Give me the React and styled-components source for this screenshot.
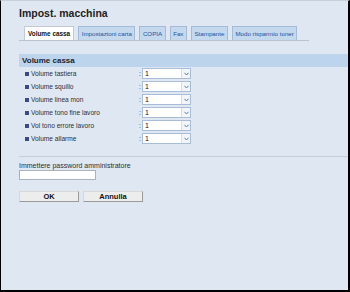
import React from "react";
import styled, { createGlobalStyle } from "styled-components";

const Global = createGlobalStyle`
  html, body { margin: 0; padding: 0; }
  body { font-family: "Liberation Sans", Arial, sans-serif; }
  * { box-sizing: border-box; }
`;

const Frame = styled.div`
  width: 350px;
  height: 292px;
  background: #dfe8f2;
  border-top: 1px solid #c9cfd6;
  border-left: 1px solid #000;
  border-right: 2px solid #000;
  border-bottom: 2px solid #000;
  padding-left: 18px;
  color: #1a1a1a;
  overflow: hidden;
`;

const Title = styled.h1`
  margin: 5px 0 0;
  font-size: 10.5px;
  line-height: 14px;
  font-weight: bold;
  color: #222;
`;

const TabBar = styled.div`
  display: flex;
  gap: 4px;
  width: 290px;
  margin-top: 6px;
  padding-left: 5px;
  border-bottom: 1px solid #b9c3ce;
`;

const Tab = styled.div`
  height: 14px;
  padding: 0 ${(p) => (p.$active ? 3 : 2.5)}px;
  display: flex;
  align-items: center;
  font-size: ${(p) => (p.$active ? 6.4 : 6.2)}px;
  white-space: nowrap;
  border: 1px solid ${(p) => (p.$active ? "#c3c9d0" : "#a3bbd6")};
  border-bottom: none;
  background: ${(p) => (p.$active ? "#fff" : "#c4d8ee")};
  color: ${(p) => (p.$active ? "#111" : "#2452a0")};
  font-weight: ${(p) => (p.$active ? "bold" : "normal")};
`;

const SectionBar = styled.div`
  margin-top: 13px;
  height: 13px;
  background: #bdd5ec;
  font-size: 8px;
  font-weight: bold;
  line-height: 13px;
  padding-left: 3px;
  color: #1c2330;
`;

const Rows = styled.div`
  display: flex;
  flex-direction: column;
`;

const Row = styled.div`
  display: flex;
  align-items: center;
  height: 13px;
  padding-left: 6px;
  font-size: 6.6px;
  color: #2a2f3a;
`;

const Bullet = styled.span`
  width: 4px;
  height: 4px;
  background: #3b4a80;
  margin-right: 2px;
`;

const Label = styled.span`
  width: 108px;
`;

const Colon = styled.span`
  width: 3px;
`;

const Select = styled.div`
  display: flex;
  width: 49px;
  height: 11px;
  background: #fff;
  border: 1px solid #a9bdd6;
`;

const Value = styled.span`
  flex: 1;
  padding-left: 2px;
  font-size: 7px;
  line-height: 9px;
  color: #111;
`;

const Arrow = styled.span`
  width: 9px;
  display: flex;
  align-items: center;
  justify-content: center;
  background: #f2f5fa;
  border-left: 1px solid #d4deea;
`;

const Divider = styled.div`
  margin-top: 11px;
  height: 1px;
  background: #c5ced8;
`;

const FieldLabel = styled.div`
  margin-top: 4px;
  font-size: 7px;
  line-height: 9px;
  color: #2a2f3a;
`;

const Input = styled.div`
  width: 77px;
  height: 10px;
  background: #fff;
  border: 1px solid #aab3bd;
`;

const Buttons = styled.div`
  display: flex;
  gap: 4px;
  margin-top: 11px;
`;

const Button = styled.div`
  width: 60px;
  height: 11px;
  display: flex;
  align-items: center;
  justify-content: center;
  font-size: 7.5px;
  font-weight: bold;
  color: #111;
  background: #ededed;
  border: 1px solid #9a9a9a;
  border-top-color: #d8d8d8;
  border-left-color: #d8d8d8;
`;

const tabs = [
  "Volume cassa",
  "Impostazioni carta",
  "COPIA",
  "Fax",
  "Stampante",
  "Modo risparmio toner",
];

const rows = [
  "Volume tastiera",
  "Volume squillo",
  "Volume linea mon",
  "Volume tono fine lavoro",
  "Vol tono errore lavoro",
  "Volume allarme",
];

function Chevron() {
  return (
    <svg width="5" height="4" viewBox="0 0 5 4">
      <path d="M0.5 0.8 L2.5 3 L4.5 0.8" fill="none" stroke="#5a7db5" strokeWidth="1" />
    </svg>
  );
}

export default function App() {
  return (
    <Frame>
      <Global />
      <Title>Impost. macchina</Title>
      <TabBar>
        {tabs.map((t, i) => (
          <Tab key={t} $active={i === 0}>
            {t}
          </Tab>
        ))}
      </TabBar>
      <SectionBar>Volume cassa</SectionBar>
      <Rows>
        {rows.map((r) => (
          <Row key={r}>
            <Bullet />
            <Label>{r}</Label>
            <Colon>:</Colon>
            <Select>
              <Value>1</Value>
              <Arrow>
                <Chevron />
              </Arrow>
            </Select>
          </Row>
        ))}
      </Rows>
      <Divider />
      <FieldLabel>Immettere password amministratore</FieldLabel>
      <Input />
      <Buttons>
        <Button>OK</Button>
        <Button>Annulla</Button>
      </Buttons>
    </Frame>
  );
}
